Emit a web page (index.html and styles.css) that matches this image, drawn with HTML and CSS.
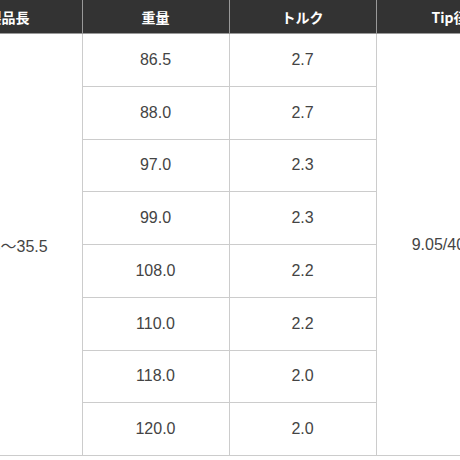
FILE: index.html
```html
<!DOCTYPE html>
<html lang="ja">
<head>
<meta charset="utf-8">
<link rel="stylesheet" href="styles.css">
</head>
<body>
<table class="spec">
  <colgroup>
    <col class="c"><col class="c"><col class="c"><col class="c">
  </colgroup>
  <thead>
    <tr><th>製品長</th><th>重量</th><th>トルク</th><th>Tip径</th></tr>
  </thead>
  <tbody>
    <tr><td rowspan="8">34.5〜35.5</td><td>86.5</td><td>2.7</td><td rowspan="8">9.05/40.20</td></tr>
    <tr><td>88.0</td><td>2.7</td></tr>
    <tr><td>97.0</td><td>2.3</td></tr>
    <tr><td>99.0</td><td>2.3</td></tr>
    <tr><td>108.0</td><td>2.2</td></tr>
    <tr><td>110.0</td><td>2.2</td></tr>
    <tr><td>118.0</td><td>2.0</td></tr>
    <tr><td>120.0</td><td>2.0</td></tr>
  </tbody>
</table>
</body>
</html>
```
FILE: styles.css
```css
html, body {
  margin: 0;
  padding: 0;
  background: #fff;
}
body {
  font-family: "Noto Sans CJK JP", "Noto Sans", sans-serif;
  overflow: hidden;
}
.spec {
  border-collapse: collapse;
  table-layout: fixed;
  width: 589px;
  margin-left: -65.5px;
}
.spec .c {
  width: 147px;
}
.spec th {
  background: #333;
  color: #fff;
  font-weight: bold;
  font-size: 14px;
  height: 33px;
  padding: 0;
  border: 1px solid #999;
  border-top: none;
  text-align: center;
  vertical-align: middle;
}
.spec td {
  border: 1px solid #ccc;
  color: #444;
  font-family: "Liberation Sans", "Noto Sans CJK JP", sans-serif;
  font-size: 16px;
  height: 51.75px;
  padding: 0;
  text-align: center;
  vertical-align: middle;
}
```
